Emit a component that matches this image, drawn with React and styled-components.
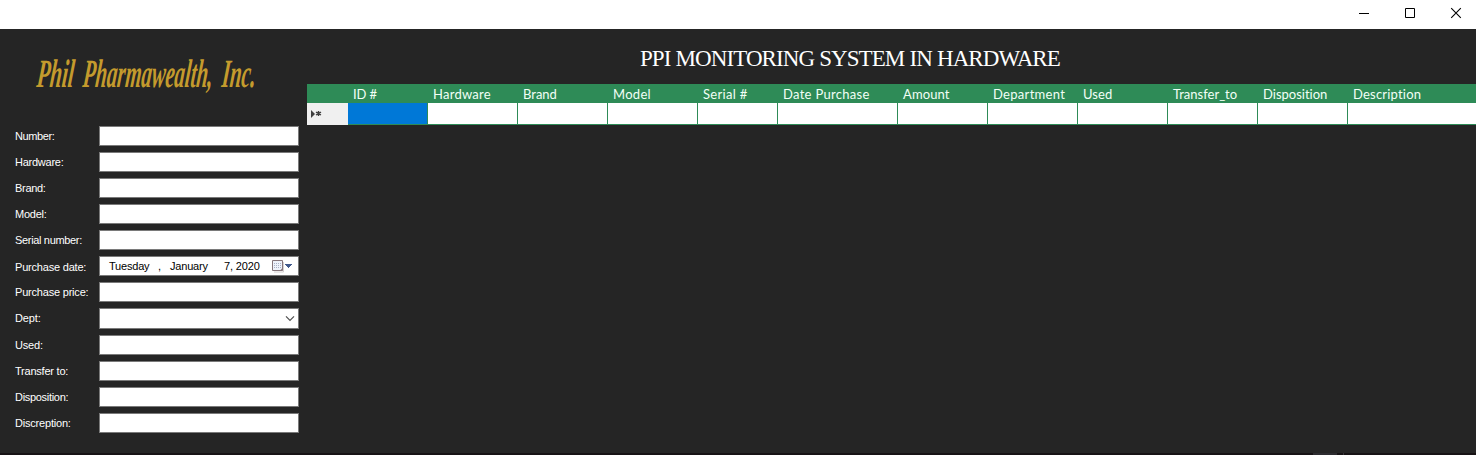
import React from "react";
import styled, { createGlobalStyle } from "styled-components";

const Global = createGlobalStyle`
  * { box-sizing: border-box; }
  body { margin: 0; background: #252525; font-family: "Liberation Sans", Arial, sans-serif; overflow: hidden; }
`;

const Window = styled.div`
  display: flex;
  flex-direction: column;
  width: 1476px;
  height: 455px;
  background: #252525;
`;

const TitleBar = styled.header`
  display: flex;
  justify-content: flex-end;
  flex: 0 0 29px;
  padding-right: 14px;
  gap: 34px;
  background: #fff;
`;

const WindowButton = styled.button`
  width: 12px;
  height: 29px;
  padding: 0;
  border: 0;
  background: none;
  svg { display: block; }
`;

const Content = styled.main`
  display: flex;
  flex: 1;
  min-height: 0;
`;

const Sidebar = styled.aside`
  flex: 0 0 307px;
`;

const Logo = styled.svg`
  display: block;
  width: 307px;
  height: 97px;
  overflow: visible;
`;

const Form = styled.form`
  display: flex;
  flex-direction: column;
  gap: 6px;
`;

const Field = styled.div`
  display: flex;
  height: ${(p) => p.$height || 20}px;
  padding-left: 15px;
`;

const Label = styled.label`
  flex: 0 0 84px;
  padding-top: ${(p) => p.$top || 3}px;
  color: #fff;
  font-size: 11px;
  line-height: 14px;
  white-space: nowrap;
  letter-spacing: ${(p) => p.$spacing || 0}px;
`;

const Box = styled.div`
  display: flex;
  align-items: center;
  width: 200px;
  height: 100%;
  border: 1px solid #7a7a7a;
  background: #fff;
  color: #000;
  font-size: 11px;
  line-height: 14px;
`;

const DatePart = styled.span`
  flex: 0 0 ${(p) => p.$width}px;
  white-space: nowrap;
  letter-spacing: ${(p) => p.$spacing || 0}px;
`;

const DateBox = styled(Box)`
  padding-left: 9px;
`;

const SelectBox = styled(Box)`
  justify-content: flex-end;
  padding-right: 3px;
`;

const Panel = styled.section`
  flex: 1;
  min-width: 0;
`;

const Heading = styled.h1`
  margin: 0;
  height: 55px;
  padding: 17px 0 0 333px;
  color: #fff;
  font: 400 23px/26px "Liberation Serif", "Times New Roman", serif;
  letter-spacing: -0.93px;
  word-spacing: 0.3px;
  white-space: nowrap;
`;

const columnTracks = "41px 80px 90px 90px 90px 80px 120px 90px 90px 90px 90px 90px 1fr";

const HeaderRow = styled.div`
  display: grid;
  grid-template-columns: ${columnTracks};
  height: 19px;
  background: #2e8b57;
`;

const HeaderCell = styled.div`
  padding-left: 5px;
  color: #f2fff6;
  font: 400 13px/20px Lato, sans-serif;
  font-variant-ligatures: none;
  letter-spacing: ${(p) => p.$spacing || 0}px;
  white-space: nowrap;
`;

const DataRow = styled.div`
  display: grid;
  grid-template-columns: ${columnTracks};
  height: 22px;
`;

const RowMarker = styled.div`
  background: #f0f0f0;
  svg { display: block; }
`;

const Cell = styled.div`
  border-right: ${(p) => (p.$last ? 0 : 1)}px solid #2e8b57;
  border-bottom: 1px solid #2e8b57;
  background: ${(p) => (p.$selected ? "#0078d7" : "#fff")};
`;

const BottomEdge = styled.footer`
  display: flex;
  flex: 0 0 2px;
  padding-left: 1313px;
  background: #171315;
`;

const EdgeTab = styled.div`
  width: 24px;
  margin-right: 6px;
  background: #2d2c30;
`;

const EdgeTick = styled.div`
  width: 1px;
  background: #38363a;
`;

const columns = [
  ["ID #", -0.15], ["Hardware", 0.25], ["Brand", 0], ["Model", 0.3], ["Serial #", 0.3],
  ["Date Purchase", 0.3], ["Amount", 0.1], ["Department", 0.3], ["Used", 0.1],
  ["Transfer_to", 0], ["Disposition", 0], ["Description", 0.2],
];

const CalendarIcon = () => (
  <svg width="22" height="14" viewBox="0 0 22 14">
    <path d="M2 13h9.5V3" fill="none" stroke="#d4d0d0" />
    <path d="M.5 1.5h10v10h-10z" fill="#eef2fa" stroke="#85757a" />
    <path d="M2 4.5h7M2 6.5h7M2 8.5h7" stroke="#a9b1c6" strokeDasharray="1 1" />
    <path d="M8 11.5L10.5 9v2.5z" fill="#85757a" />
    <path d="M13 5h7v1h-1v1h-1v1h-1v1h-1V8h-1V7h-1V6h-1z" fill="#41598c" />
  </svg>
);

const ChevronIcon = () => (
  <svg width="10" height="7" viewBox="0 0 10 7">
    <path d="M1 1.3l4 4 4-4" fill="none" stroke="#505050" strokeWidth="1.2" />
  </svg>
);

const TextField = ({ label, spacing, top }) => (
  <Field>
    <Label $spacing={spacing} $top={top}>{label}</Label>
    <Box />
  </Field>
);

export default function App() {
  return (
    <Window>
      <Global />
      <TitleBar>
        <WindowButton aria-label="Minimize">
          <svg width="12" height="29"><path d="M1 13.5h10" stroke="#000" /></svg>
        </WindowButton>
        <WindowButton aria-label="Maximize">
          <svg width="12" height="29"><path d="M1.5 8.5h9v9h-9z" fill="none" stroke="#000" /></svg>
        </WindowButton>
        <WindowButton aria-label="Close">
          <svg width="12" height="29"><path d="M1.2 8.2l9.6 9.6M10.8 8.2l-9.6 9.6" stroke="#000" strokeWidth="1.1" /></svg>
        </WindowButton>
      </TitleBar>
      <Content>
        <Sidebar>
          <Logo role="img" aria-label="Phil Pharmawealth, Inc.">
            <g fill="#c49b2d" fontFamily="Liberation Serif, serif" fontStyle="italic" fontWeight="700" fontSize="40">
              <text transform="translate(36 58) skewX(-6)" textLength="37" lengthAdjust="spacingAndGlyphs">Phil</text>
              <text transform="translate(82 58) skewX(-6)" textLength="130" lengthAdjust="spacingAndGlyphs">Pharmawealth,</text>
              <text transform="translate(221 58) skewX(-6)" textLength="34" lengthAdjust="spacingAndGlyphs">Inc.</text>
            </g>
          </Logo>
          <Form>
            <TextField label="Number:" spacing={-0.4} />
            <TextField label="Hardware:" spacing={-0.25} />
            <TextField label="Brand:" spacing={-0.3} />
            <TextField label="Model:" spacing={-0.25} />
            <TextField label="Serial number:" spacing={-0.33} />
            <Field>
              <Label $spacing={-0.2} $top={4}>Purchase date:</Label>
              <DateBox>
                <DatePart $width={49} $spacing={-0.2}>Tuesday</DatePart>
                <DatePart $width={12}>,</DatePart>
                <DatePart $width={54} $spacing={-0.2}>January</DatePart>
                <DatePart $width={48} $spacing={-0.15}>7, 2020</DatePart>
                <CalendarIcon />
              </DateBox>
            </Field>
            <TextField label="Purchase price:" spacing={-0.2} />
            <Field $height={21}>
              <Label $spacing={-0.15}>Dept:</Label>
              <SelectBox><ChevronIcon /></SelectBox>
            </Field>
            <TextField label="Used:" spacing={-0.2} />
            <TextField label="Transfer to:" spacing={-0.22} />
            <TextField label="Disposition:" spacing={-0.3} />
            <TextField label="Discreption:" spacing={-0.2} />
          </Form>
        </Sidebar>
        <Panel>
          <Heading>PPI MONITORING SYSTEM IN HARDWARE</Heading>
          <HeaderRow>
            <HeaderCell />
            {columns.map(([name, spacing]) => (
              <HeaderCell key={name} $spacing={spacing}>{name}</HeaderCell>
            ))}
          </HeaderRow>
          <DataRow>
            <RowMarker>
              <svg width="41" height="22">
                <path d="M4 7l4 4-4 4z" fill="#404040" />
                <path d="M11.5 8v5M9 9.2l5 2.8M14 9.2l-5 2.8" stroke="#404040" strokeWidth="1.4" />
              </svg>
            </RowMarker>
            {columns.map(([name], i) => (
              <Cell key={name} $selected={i === 0} $last={i === columns.length - 1} />
            ))}
          </DataRow>
        </Panel>
      </Content>
      <BottomEdge><EdgeTab /><EdgeTick /></BottomEdge>
    </Window>
  );
}
